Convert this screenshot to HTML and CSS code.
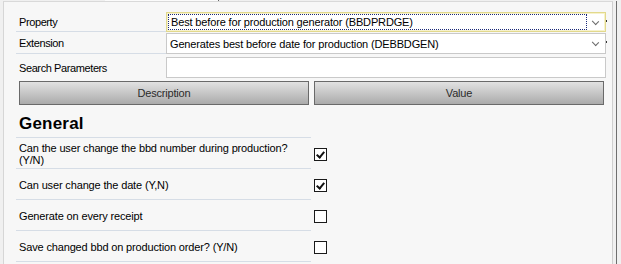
FILE: index.html
```html
<!DOCTYPE html>
<html lang="en">
<head>
  <meta charset="UTF-8">
  <title>Property Settings</title>
  <link rel="stylesheet" href="styles.css">
</head>
<body>

<div class="window">
  <!-- Tab strip edge at the top -->
  <div class="tabstrip"><div class="tab-edge"></div></div>

  <div class="frame">
    <div class="panel">

      <!-- Property / Extension / Search -->
      <div class="form">
        <div class="form-row row-first">
          <div class="form-label">Property</div>
          <div class="combo combo-focused">
            <span class="combo-text focus-rect">Best before for production generator (BBDPRDGE)</span>
            <span class="chevron"></span>
            <span class="dot"></span>
          </div>
        </div>
        <div class="form-row row-second">
          <div class="form-label">Extension</div>
          <div class="combo">
            <span class="combo-text">Generates best before date for production (DEBBDGEN)</span>
            <span class="chevron"></span>
            <span class="dot"></span>
          </div>
        </div>
        <div class="form-row row-search">
          <div class="form-label no-line">Search Parameters</div>
          <div class="textbox"></div>
        </div>
      </div>

      <!-- Column headers -->
      <div class="headers">
        <button class="col-btn">Description</button>
        <button class="col-btn">Value</button>
      </div>

      <!-- Properties grid -->
      <div class="section-title">General</div>
      <div class="prop-list">
        <div class="prop-row">
          <div class="prop-label">Can the user change the bbd number during production?<br>(Y/N)</div>
          <div class="check checked"></div>
        </div>
        <div class="prop-row">
          <div class="prop-label">Can user change the date (Y,N)</div>
          <div class="check checked"></div>
        </div>
        <div class="prop-row">
          <div class="prop-label">Generate on every receipt</div>
          <div class="check"></div>
        </div>
        <div class="prop-row">
          <div class="prop-label">Save changed bbd on production order? (Y/N)</div>
          <div class="check"></div>
        </div>
      </div>

    </div>
    <div class="frame-gap"></div>
    <div class="frame-edge"></div>
  </div>
</div>

</body>
</html>
```

FILE: styles.css
```css
body {
  margin: 0;
  font-family: 'Liberation Sans', Arial, sans-serif;
  background-color: #f0f0f0;
  color: #000;
  overflow: hidden;
}

.window {
  width: 621px;
  height: 264px;
  display: flex;
  flex-direction: column;
}

/* 1px strip above the panel, with the bottom of a tab */
.tabstrip {
  height: 1px;
  display: flex;
}

.tab-edge {
  margin-left: 105px;
  width: 113px;
  height: 1px;
  background-color: #fbfbfb;
  border-right: 1px solid #6a6a6a;
}

.frame {
  flex: 1;
  display: flex;
}

.panel {
  margin-left: 3px;
  width: 610px;
  background-color: #f7f7f7;
  border-top: 1px solid #d9d9d9;
  border-left: 1px solid #d6d6d6;
  border-right: 1px solid #cfcfcf;
  padding: 10px 0 0 12px;
  box-sizing: border-box;
}

.frame-gap {
  width: 3px;
  background-color: #f0f0f0;
}

.frame-edge {
  width: 1px;
  background-color: #6e6e6e;
}

/* Top form */
.form-row {
  display: flex;
  height: 21px;
}

.row-first {
  height: 20px;
}

.row-second {
  margin-top: 1px;
}

.row-search {
  margin-top: 3px;
}

.form-label {
  width: 150px;
  box-sizing: border-box;
  padding-left: 3px;
  font-size: 11px;
  letter-spacing: -0.4px;
  display: flex;
  align-items: center;
  border-bottom: 1px solid #d6dde6;
  color: #000;
}

.row-second .form-label {
  margin-top: -1px;
  height: 22px;
}

.form-label.no-line {
  border-bottom: none;
}

.combo, .textbox {
  width: 440px;
  box-sizing: border-box;
  background-color: #fff;
  border: 1px solid #c9c9c9;
  position: relative;
  display: flex;
  align-items: center;
}

.combo-focused {
  border-color: #e2d98c;
  box-shadow: inset 0 0 0 1px #f7f2cc;
}

.combo-text {
  font-size: 11px;
  letter-spacing: -0.15px;
  padding-left: 3px;
  color: #000;
  white-space: nowrap;
}

.focus-rect {
  margin-left: 1px;
  padding: 1px 0 1px 2px;
  width: 419px;
  border: 1px dotted #1b2a7a;
  box-sizing: border-box;
}

.chevron {
  position: absolute;
  right: 7px;
  top: 6px;
  width: 4px;
  height: 4px;
  border-right: 1px solid #6a6a6a;
  border-bottom: 1px solid #6a6a6a;
  transform: rotate(45deg) scaleX(1.1);
}

.dot {
  position: absolute;
  right: -2px;
  top: 7px;
  width: 1px;
  height: 2px;
  background-color: #333;
}

/* Column header buttons */
.headers {
  display: flex;
  gap: 5px;
  margin: 3px 0 0 3px;
}

.col-btn {
  width: 290px;
  height: 24px;
  border: 1px solid #6a6a6a;
  background: linear-gradient(to bottom, #e2e2e2, #ababab);
  font-family: 'Liberation Sans', Arial, sans-serif;
  font-size: 11px;
  letter-spacing: -0.2px;
  color: #2b2b2b;
  padding: 0;
}

/* Section title */
.section-title {
  width: 295px;
  box-sizing: border-box;
  padding: 9px 0 3px 3px;
  font-size: 17px;
  font-weight: bold;
  line-height: 20px;
  letter-spacing: 0.2px;
  border-bottom: 1px solid #d6dde6;
}

.prop-row {
  display: flex;
  align-items: center;
  height: 31px;
  padding-top: 2px;
  box-sizing: border-box;
}

.prop-label {
  width: 295px;
  height: 31px;
  margin-top: -2px;
  box-sizing: border-box;
  padding: 2px 0 0 3px;
  display: flex;
  align-items: center;
  font-size: 11px;
  line-height: 12px;
  letter-spacing: -0.15px;
  border-bottom: 1px solid #d6dde6;
  color: #000;
}

.check {
  width: 13px;
  height: 13px;
  box-sizing: border-box;
  margin-left: 3px;
  border: 1px solid #1a1a1a;
  background-color: #fff;
  position: relative;
}

.check.checked::after {
  content: '';
  position: absolute;
  left: 3px;
  top: 1px;
  width: 3px;
  height: 6px;
  border-right: 2px solid #111;
  border-bottom: 2px solid #111;
  transform: rotate(40deg);
}
```
